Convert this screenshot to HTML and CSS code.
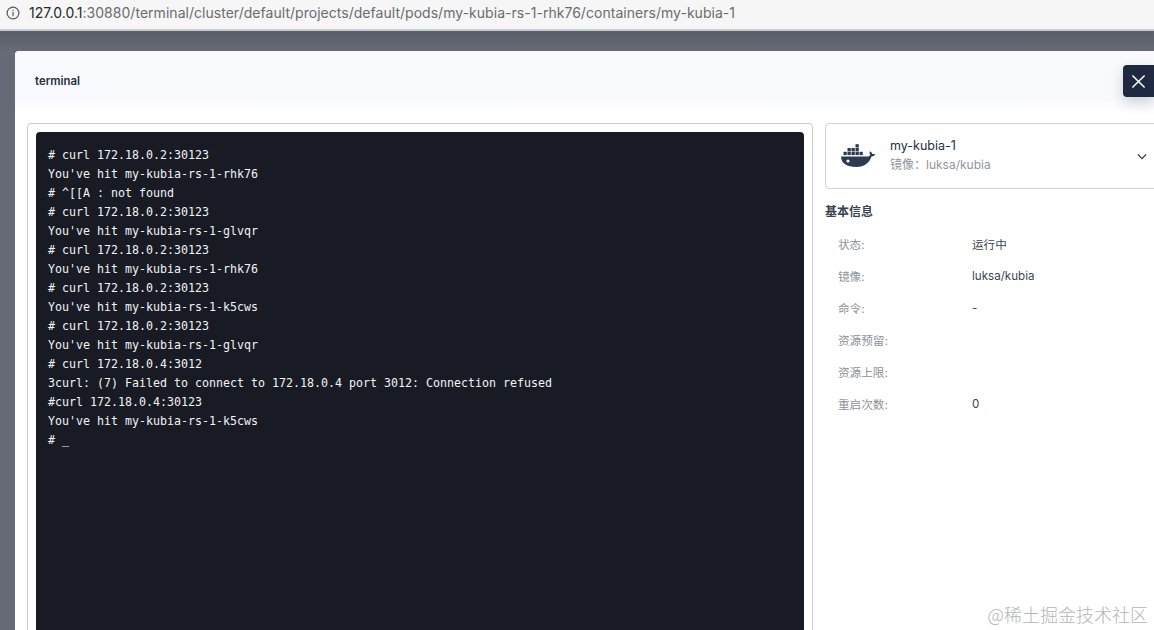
FILE: index.html
```html
<!DOCTYPE html>
<html lang="zh">
<head>
<meta charset="utf-8">
<title>terminal</title>
<link rel="stylesheet" href="styles.css">
</head>
<body>
<div class="addressbar">
  <svg class="info" viewBox="0 0 14 14" width="14" height="14"><circle cx="7" cy="7" r="5.9" fill="none" stroke="#55585c" stroke-width="1.2"/><rect x="6.4" y="6" width="1.2" height="4.2" fill="#55585c"/><rect x="6.4" y="3.8" width="1.2" height="1.3" fill="#55585c"/></svg>
  <span class="url"><span class="host">127.0.0.1</span>:30880/terminal/cluster/default/projects/default/pods/my-kubia-rs-1-rhk76/containers/my-kubia-1</span>
</div>
<div class="backdrop">
  <div class="modal">
    <header class="modal-head">terminal</header>
    <div class="modal-body">
      <section class="term-panel">
        <pre class="terminal"># curl 172.18.0.2:30123
You've hit my-kubia-rs-1-rhk76
# ^[[A : not found
# curl 172.18.0.2:30123
You've hit my-kubia-rs-1-glvqr
# curl 172.18.0.2:30123
You've hit my-kubia-rs-1-rhk76
# curl 172.18.0.2:30123
You've hit my-kubia-rs-1-k5cws
# curl 172.18.0.2:30123
You've hit my-kubia-rs-1-glvqr
# curl 172.18.0.4:3012
3curl: (7) Failed to connect to 172.18.0.4 port 3012: Connection refused
#curl 172.18.0.4:30123
You've hit my-kubia-rs-1-k5cws
# _</pre>
      </section>
      <aside class="side">
        <div class="container-card">
          <svg class="docker" viewBox="0 0 36 24" width="36" height="24">
            <g fill="#2b3a4e">
              <path d="M1 12.5h26.2c1.2 0 2.4-.5 3-1.3-.6-1-.8-2.600-.3-3.900 1.100.5 2 1.400 2.400 2.600 1 0 2-.1 3 .4-.8 1.500-2.200 2.200-3.800 2.300C29.500 18.800 24.500 23 16.500 23 7 23 1 19 1 12.500z"/>
              <rect x="3.500" y="7.800" width="3.300" height="3.300"/><rect x="7.500" y="7.800" width="3.300" height="3.300"/><rect x="11.500" y="7.800" width="3.300" height="3.300"/><rect x="15.500" y="7.800" width="3.300" height="3.300"/><rect x="19.500" y="7.800" width="3.300" height="3.300"/>
              <rect x="7.500" y="4" width="3.300" height="3.300"/><rect x="11.500" y="4" width="3.300" height="3.300"/><rect x="15.500" y="4" width="3.300" height="3.300"/>
              <rect x="15.500" y="0.200" width="3.300" height="3.300"/>
            </g>
            <circle cx="8" cy="17" r="1.600" fill="#fff"/>
          </svg>
          <div class="card-text">
            <div class="card-name">my-kubia-1</div>
            <div class="card-image">镜像：luksa/kubia</div>
          </div>
          <svg class="chevron" viewBox="0 0 12 8" width="10" height="7"><path d="M1 1.500l5 5 5-5" fill="none" stroke="#2b3445" stroke-width="1.500"/></svg>
        </div>
        <h3 class="side-title">基本信息</h3>
        <dl class="info-list">
          <div class="info-row"><dt>状态:</dt><dd>运行中</dd></div>
          <div class="info-row"><dt>镜像:</dt><dd>luksa/kubia</dd></div>
          <div class="info-row"><dt>命令:</dt><dd>-</dd></div>
          <div class="info-row"><dt>资源预留:</dt><dd></dd></div>
          <div class="info-row"><dt>资源上限:</dt><dd></dd></div>
          <div class="info-row"><dt>重启次数:</dt><dd>0</dd></div>
        </dl>
      </aside>
    </div>
    <button class="close" aria-label="close"><svg viewBox="0 0 16 16" width="15" height="15"><path d="M1.500 1.500l13 13M14.500 1.500l-13 13" stroke="#fff" stroke-width="1.600" fill="none"/></svg></button>
  </div>
</div>
<div class="watermark">@稀土掘金技术社区</div>
</body>
</html>
```
FILE: styles.css
```css
* { box-sizing: border-box; }
html, body { margin: 0; height: 100%; overflow: hidden; }
body {
  position: relative;
  width: 1154px;
  height: 630px;
  font-family: Inter, "Noto Sans CJK SC", sans-serif;
  background: #5f6470;
}
.addressbar {
  height: 31px;
  display: flex;
  align-items: center;
  gap: 9px;
  padding: 0 0 4px 6px;
  background: #f6f6f6;
  border-bottom: 2px solid #c9cbcf;
}
.info { flex: none; }
.url {
  font-size: 14px;
  letter-spacing: 0.03px;
  color: #6a6c70;
  white-space: nowrap;
}
.host { color: #26282b; }
.backdrop {
  height: 599px;
  padding: 20px 0 0 15px;
  background: linear-gradient(#5a5e69, #656a76 20px);
  overflow: hidden;
}
.modal {
  position: relative;
  height: 620px;
  background: #fff;
  border-radius: 4px 0 0 0;
}
.modal-head {
  height: 60px;
  padding: 23px 0 0 20px;
  font-size: 11.4px;
  line-height: 14px;
  font-weight: 600;
  color: #242e42;
  background: linear-gradient(#f8fafd 80%, #fff);
  border-radius: 4px 0 0 0;
}
.modal-body {
  display: flex;
  gap: 12px;
  padding: 12px 0 0 12px;
}
.term-panel {
  flex: none;
  width: 786px;
  height: 560px;
  padding: 8px;
  border: 1px solid #c9cbcd;
  border-radius: 4px;
}
.terminal {
  margin: 0;
  height: 540px;
  padding: 14px 12px;
  background: #181b24;
  border-radius: 4px;
  color: #f2f3f4;
  font-family: "DejaVu Sans Mono", monospace;
  font-size: 11.63px;
  line-height: 19px;
}
.side { flex: none; width: 340px; }
.container-card {
  height: 66px;
  display: flex;
  align-items: center;
  padding: 0 17px 0 14px;
  border: 1px solid #cfd2d5;
  border-radius: 4px;
}
.docker { flex: none; }
.card-text { flex: 1; margin-left: 14px; padding-top: 1px; }
.card-name { font-size: 12.5px; line-height: 17px; color: #242e42; }
.card-image { font-size: 12px; line-height: 22px; color: #8f959e; }
.chevron { flex: none; }
.side-title {
  margin: 16px 0 0;
  font-size: 12px;
  line-height: 14px;
  font-weight: 600;
  color: #3a4250;
}
.info-list { margin: 9px 0 0; }
.info-row {
  display: flex;
  height: 32px;
  align-items: center;
  padding-left: 13px;
  font-size: 11.6px;
}
.info-row dt { width: 134px; color: #8c929a; }
.info-row dd { margin: 0; color: #3b4350; }
.close {
  position: absolute;
  top: 14px;
  right: 0;
  width: 31px;
  height: 32px;
  padding: 0;
  display: flex;
  align-items: center;
  justify-content: center;
  background: #1f2a40;
  border: none;
  border-radius: 4px 0 0 4px;
  box-shadow: 0 6px 14px rgba(36, 46, 66, 0.2);
}
.watermark {
  position: absolute;
  right: 6px;
  bottom: 6px;
  font-family: "Noto Sans CJK SC", sans-serif;
  font-weight: 300;
  font-size: 18px;
  line-height: 20px;
  color: #b5b5b5;
}
```
